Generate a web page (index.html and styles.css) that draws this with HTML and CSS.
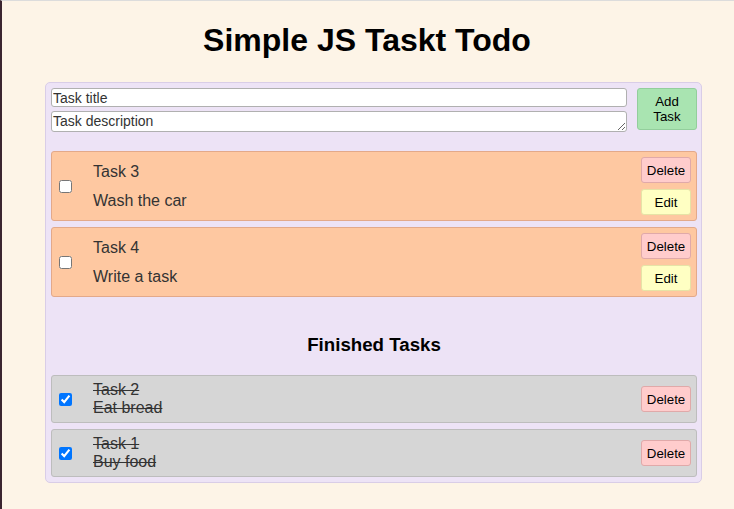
FILE: index.html
```html
<!DOCTYPE html>
<html>
<head>
<meta charset="utf-8">
<link rel="stylesheet" href="styles.css">
</head>
<body>
<div class="page">
  <h1 class="title">Simple JS Taskt Todo</h1>
  <div class="app">
    <form class="add-form">
      <div class="fields">
        <input class="field" type="text" placeholder="Task title">
        <textarea class="field area" placeholder="Task description"></textarea>
      </div>
      <button type="button" class="btn add">Add<br>Task</button>
    </form>
    <div class="list">
      <div class="task active">
        <input type="checkbox" class="check">
        <div class="text">
          <div class="t">Task 3</div>
          <div class="d">Wash the car</div>
        </div>
        <div class="actions">
          <button class="btn del">Delete</button>
          <button class="btn edit">Edit</button>
        </div>
      </div>
      <div class="task active">
        <input type="checkbox" class="check">
        <div class="text">
          <div class="t">Task 4</div>
          <div class="d">Write a task</div>
        </div>
        <div class="actions">
          <button class="btn del">Delete</button>
          <button class="btn edit">Edit</button>
        </div>
      </div>
    </div>
    <h3 class="subtitle">Finished Tasks</h3>
    <div class="list">
      <div class="task done">
        <input type="checkbox" class="check" checked>
        <div class="text">
          <div class="t">Task 2</div>
          <div class="d">Eat bread</div>
        </div>
        <div class="actions">
          <button class="btn del">Delete</button>
        </div>
      </div>
      <div class="task done">
        <input type="checkbox" class="check" checked>
        <div class="text">
          <div class="t">Task 1</div>
          <div class="d">Buy food</div>
        </div>
        <div class="actions">
          <button class="btn del">Delete</button>
        </div>
      </div>
    </div>
  </div>
</div>
</body>
</html>
```

FILE: styles.css
```css
html, body {
  margin: 0;
  padding: 0;
  height: 100%;
}
body {
  background: #fdf4e7;
  font-family: "Liberation Sans", Arial, sans-serif;
  color: #000;
}
.page {
  min-height: 100%;
  box-sizing: border-box;
  border-top: 1px solid #dcdcdc;
  border-left: 2px solid #3a2530;
  padding-top: 21px;
}
.title {
  margin: 0 0 23px;
  font-size: 32px;
  font-weight: bold;
  text-align: center;
  line-height: 37px;
  margin-left: -2px;
}
.app {
  margin-left: 43px;
  width: 657px;
  box-sizing: border-box;
  background: #ede3f6;
  border: 1px solid #d9cde7;
  border-radius: 5px;
  padding: 5px 4px 5px 5px;
}
.add-form {
  display: flex;
  align-items: flex-start;
  gap: 10px;
  margin: 0 0 19px;
}
.fields {
  flex: 1;
  display: flex;
  flex-direction: column;
  gap: 4px;
}
.field {
  margin: 0;
  box-sizing: border-box;
  height: 19px;
  border: 1px solid #b0b0b0;
  border-radius: 3px;
  background: #fff;
  font-family: "Liberation Sans", Arial, sans-serif;
  font-size: 14px;
  padding: 0 1px;
  color: #333;
}
.field::placeholder { color: #333; }
.area {
  height: 21px;
  resize: vertical;
  padding: 1px 1px;
  line-height: 16px;
  overflow: hidden;
}
.btn {
  font-family: "Liberation Sans", Arial, sans-serif;
  font-size: 13.3px;
  color: #000;
  border-radius: 3px;
  cursor: pointer;
  padding: 0;
  margin: 0;
}
.add {
  width: 60px;
  height: 42px;
  background: #a9e4b1;
  border: 1px solid #93ce9c;
  line-height: 15px;
}
.list {
  display: flex;
  flex-direction: column;
  gap: 6px;
}
.task {
  display: flex;
  align-items: center;
  border-radius: 3px;
  padding: 5px 5px 5px 0;
}
.active {
  background: #fec8a1;
  border: 1px solid #e3a98a;
}
.done {
  background: #d6d6d6;
  border: 1px solid #bdbdbd;
  padding-top: 5px;
  padding-bottom: 5px;
}
.check {
  width: 13px;
  height: 13px;
  margin: 0 0 0 7px;
  flex: none;
}
.text {
  flex: 1;
  margin-left: 21px;
  font-size: 16px;
  color: #333;
  line-height: 18px;
}
.active .text {
  display: flex;
  flex-direction: column;
  gap: 11px;
}
.done .text {
  text-decoration: line-through;
  color: #333;
}
.actions {
  display: flex;
  flex-direction: column;
  gap: 6px;
}
.del, .edit {
  width: 50px;
  height: 26px;
}
.del {
  background: #ffcccc;
  border: 1px solid #e0a9a9;
}
.edit {
  background: #ffffc3;
  border: 1px solid #e6e3a6;
}
.subtitle {
  margin: 37px 0 19px;
  text-align: center;
  font-size: 18.7px;
  font-weight: bold;
  line-height: 22px;
}
```
